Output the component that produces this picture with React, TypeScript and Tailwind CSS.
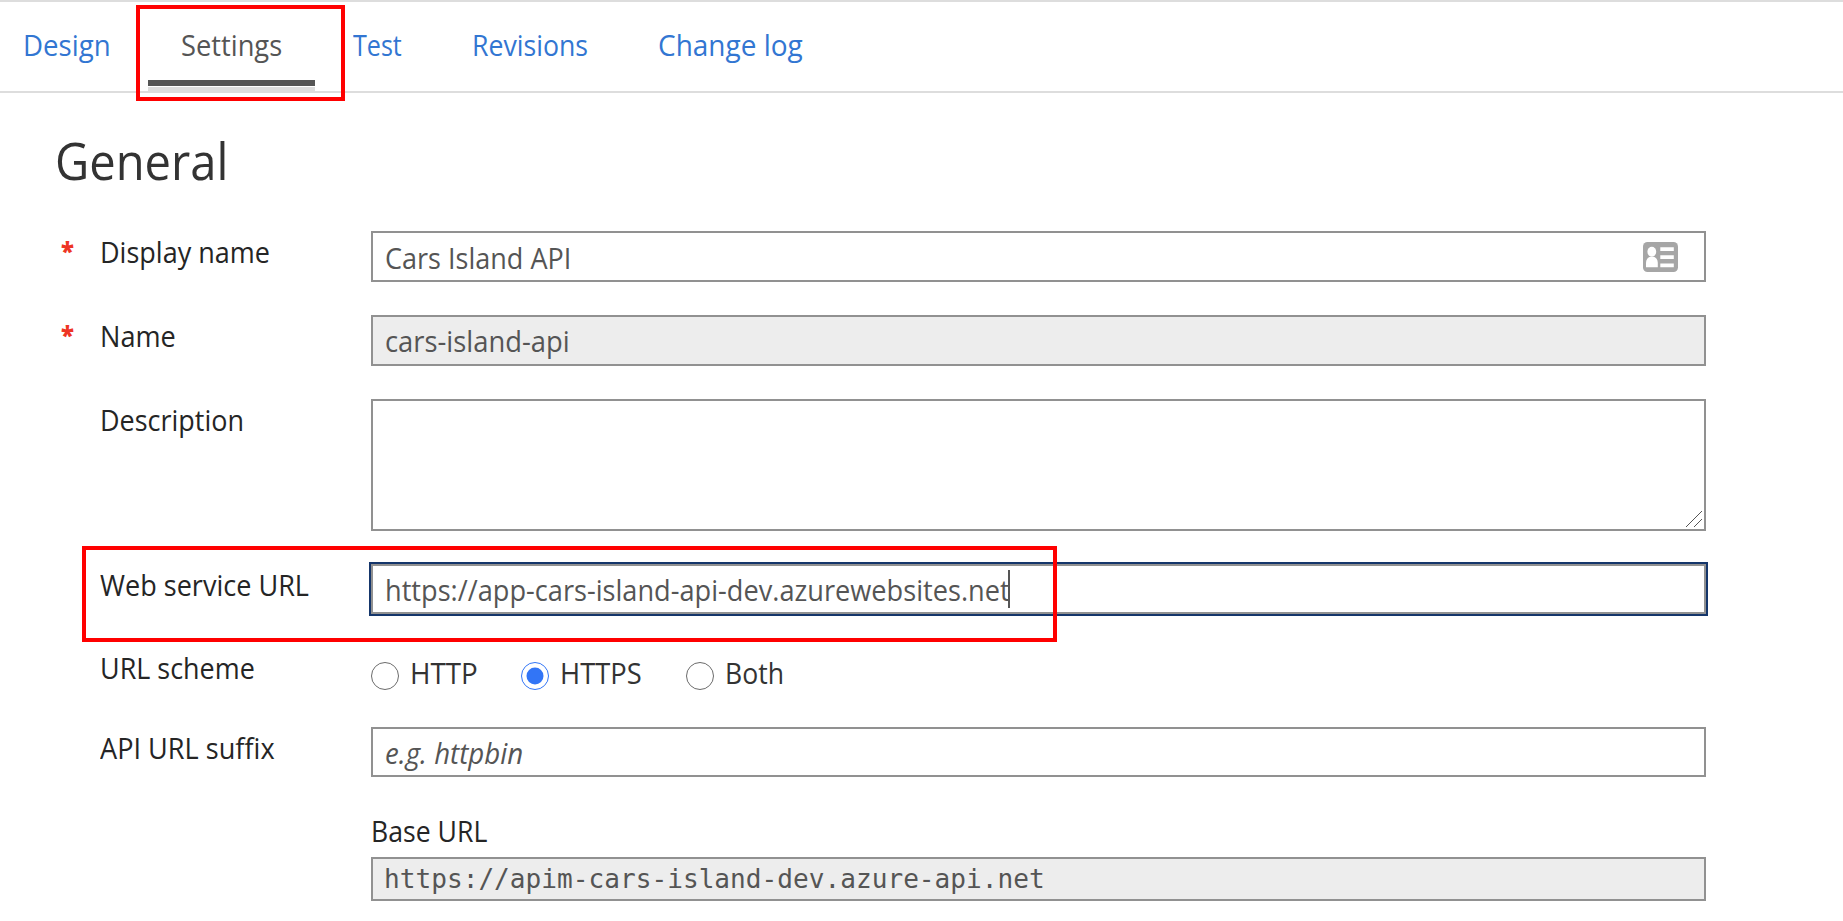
import React, { type ReactNode } from 'react';

function Text({ scale, className = '', children }: { scale: string; className?: string; children: ReactNode }) {
  return (
    <span className={`inline-block origin-left whitespace-pre ${scale} ${className}`}>{children}</span>
  );
}

function Row({
  label,
  scale,
  required,
  children,
}: {
  label: string;
  scale: string;
  required?: boolean;
  children: ReactNode;
}) {
  return (
    <div className="flex items-start">
      <div className="flex w-[310px] shrink-0 pt-px text-[#252525]">
        <span className="w-[39px] shrink-0 text-[#ee3524]">
          {required && <RequiredMark />}
        </span>
        <Text scale={scale}>{label}</Text>
      </div>
      <div className="w-[1335px] shrink-0">{children}</div>
    </div>
  );
}

function RequiredMark() {
  return <span className="-mt-px block text-[24px] font-extrabold">*</span>;
}

function ContactCardIcon() {
  return (
    <svg width="35" height="30" viewBox="0 0 35 30" className="mr-[26px] mt-[9px] shrink-0">
      <rect width="35" height="30" rx="4.5" fill="#a6a6a6" />
      <ellipse cx="8.8" cy="9.8" rx="4.4" ry="5" fill="#fff" />
      <path d="M3 25.2V21c0-3.6 2-5.8 4-6.2h3.8c2 .4 4 2.6 4 6.2v4.2z" fill="#fff" />
      <path d="M17.3 5.2h13.5V9H17.3zM17.3 13.3h13.5v3.8H17.3zM17.3 21.5h13.5v3.7H17.3z" fill="#fff" />
    </svg>
  );
}

function Radio({ checked }: { checked?: boolean }) {
  return (
    <svg width="28" height="28" viewBox="0 0 28 28" className="mt-[9px] shrink-0">
      <circle cx="14" cy="14" r="13.5" fill="#fff" stroke={checked ? '#3275f6' : '#6b6b6b'} />
      {checked && <circle cx="14" cy="14" r="8.5" fill="#3275f6" />}
    </svg>
  );
}

export default function App() {
  return (
    <div className="relative h-[921px] w-[1843px] overflow-hidden bg-white font-['Open_Sans','Noto_Sans',sans-serif] text-[29px] leading-10">
      <nav className="flex h-[93px] border-y-2 border-[#dddddd] text-[#3276d2]">
        <a className="w-[148px] pl-[23px] pt-[23px]">
          <Text scale="scale-x-[0.952]">Design</Text>
        </a>
        <a className="flex w-[167px] flex-col pt-[23px] text-[#555555]">
          <span className="pl-[32.5px]">
            <Text scale="scale-x-[0.941]">Settings</Text>
          </span>
          <span className="mt-[15px] h-1.5 bg-[#555555]" />
          <span className="mt-px h-1 bg-[#dddddd]" />
        </a>
        <a className="w-[157px] pl-[38px] pt-[23px]">
          <Text scale="scale-x-[0.865]">Test</Text>
        </a>
        <a className="w-[186px] pt-[23px]">
          <Text scale="scale-x-[0.920]">Revisions</Text>
        </a>
        <a className="pt-[23px]">
          <Text scale="scale-x-[0.965]">Change log</Text>
        </a>
      </nav>

      <main className="pt-[37px]">
        <h1 className="mb-[41px] pl-[55px] text-[52px] leading-[60px] text-[#333333]">
          <Text scale="scale-x-[0.906]">General</Text>
        </h1>

        <form className="flex flex-col gap-[33px] pl-[61px] text-[#555555]">
          <Row label="Display name" scale="scale-x-[0.932]" required>
            <div className="flex h-[51px] justify-between border-2 border-[#919191] pl-3 pt-[5px]">
              <Text scale="scale-x-[0.932]">Cars Island API</Text>
              <div className="-mt-[5px]"><ContactCardIcon /></div>
            </div>
          </Row>

          <Row label="Name" scale="scale-x-[0.935]" required>
            <div className="h-[51px] border-2 border-[#919191] bg-[#ededed] pl-3 pt-1">
              <Text scale="scale-x-[0.944]">cars-island-api</Text>
            </div>
          </Row>

          <Row label="Description" scale="scale-x-[0.930]">
            <div className="flex h-[132px] items-end justify-end border-2 border-[#919191]">
              <svg width="20" height="20" viewBox="0 0 20 20" className="shrink-0">
                <path d="M2 18L18 2M10 18L18 10" stroke="#555" strokeWidth="1" fill="none" />
              </svg>
            </div>
          </Row>

          <Row label="Web service URL" scale="scale-x-[0.933]">
            <div className="flex h-[50px] border-2 border-[#919191] pl-3 pt-1 outline-2 outline-[#15366b]">
              <div className="relative w-[626px]">
                <Text scale="scale-x-[0.937]">https://app-cars-island-api-dev.azurewebsites.net</Text>
                <span className="absolute left-[623px] top-0 h-[38px] w-0.5 bg-[#555555]" />
              </div>
            </div>
          </Row>

          <Row label="URL scheme" scale="scale-x-[0.929]">
            <div className="flex h-[47px] pt-1.5 text-[#333333]">
              <label className="flex w-[150px]">
                <Radio />
                <Text scale="scale-x-[0.958]" className="ml-[11px]">HTTP</Text>
              </label>
              <label className="flex w-[165px]">
                <Radio checked />
                <Text scale="scale-x-[0.942]" className="ml-[11px]">HTTPS</Text>
              </label>
              <label className="flex">
                <Radio />
                <Text scale="scale-x-[0.917]" className="ml-[11px]">Both</Text>
              </label>
            </div>
          </Row>

          <Row label="API URL suffix" scale="scale-x-[0.935]">
            <div className="h-[50px] border-2 border-[#919191] pl-3 pt-1 italic">
              <Text scale="scale-x-[0.953]">e.g. httpbin</Text>
            </div>
            <div className="mt-[34px] text-[#252525]">
              <Text scale="scale-x-[0.918]">Base URL</Text>
            </div>
            <div className="mt-1.5 h-11 border-2 border-[#919191] bg-[#ededed] pl-[11px] font-['DejaVu_Sans_Mono','Liberation_Mono',monospace] text-[26px]">
              <Text scale="scale-x-[1.005]">https://apim-cars-island-dev.azure-api.net</Text>
            </div>
          </Row>
        </form>
      </main>

      <div className="absolute left-[136px] top-[5px] h-24 w-[209px] border-4 border-[#ff0000]" />
      <div className="absolute left-[82px] top-[546px] h-24 w-[975px] border-4 border-[#ff0000]" />
    </div>
  );
}
